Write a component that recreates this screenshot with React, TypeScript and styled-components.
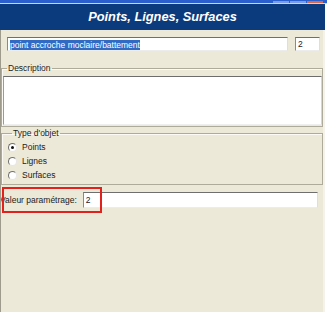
import styled, { createGlobalStyle } from "styled-components";

const GlobalStyle = createGlobalStyle`
  html, body {
    margin: 0;
    padding: 0;
    background: #fff;
  }
  body {
    font-family: "Liberation Sans", Arial, sans-serif;
  }
`;

const Window = styled.div`
  width: 327px;
  display: flex;
  flex-direction: column;
`;

const TitleStrip = styled.div`
  height: 3px;
  background: #2b5fce;
  border-bottom: 1px solid #c9d5ee;
  display: flex;
  justify-content: flex-end;
  gap: 1px;
  padding-right: 4px;
`;

const CaptionButton = styled.span<{ $close?: boolean }>`
  width: 16px;
  height: 2px;
  margin-top: 1px;
  background: ${(p) => (p.$close ? "#d9694c" : "#7c9be6")};
`;

const Header = styled.h1`
  margin: 0;
  width: 325px;
  height: 26px;
  background: #0b3b7c;
  color: #fff;
  font: italic bold 12.8px/26px "Liberation Sans", Arial, sans-serif;
  text-align: center;
`;

const Body = styled.div`
  width: 322px;
  height: 282px;
  background: #ece9d8;
  border-left: 1px solid #9e9b8c;
  border-right: 2px solid #f4f2ea;
  overflow: hidden;
  display: flex;
  flex-direction: column;
  font-size: 8.5px;
  color: #1c1c1c;
`;

const NameRow = styled.div`
  display: flex;
  gap: 7px;
  margin: 7px 0 0 6px;
`;

const TextBox = styled.div<{ $width: number; $height?: number }>`
  box-sizing: border-box;
  width: ${(p) => p.$width}px;
  height: ${(p) => p.$height ?? 14}px;
  background: #fff;
  border: 1px solid;
  border-color: #6f6f6f #dedede #ececec #8a8a8a;
  padding: 0 2px;
  line-height: ${(p) => (p.$height ?? 14) - 2}px;
  white-space: nowrap;
`;

const Selected = styled.span`
  display: inline-block;
  background: #316ac5;
  color: #fff;
  line-height: 10px;
  vertical-align: middle;
`;

const Group = styled.fieldset<{ $pad: string; $top: number }>`
  box-sizing: border-box;
  width: 322px;
  margin: ${(p) => p.$top}px 0 0;
  padding: ${(p) => p.$pad};
  border: 1px solid #aeab9b;
  box-shadow: inset 1px 1px 0 #fbfaf5;
  min-width: 0;
`;

const Legend = styled.legend`
  margin-left: 4px;
  padding: 0 1px;
  line-height: 10px;
  font-size: 8.5px;
`;

const TextArea = styled.div`
  box-sizing: border-box;
  height: 49px;
  background: #fff;
  border: 1px solid;
  border-color: #6d6d6d #d6d6d6 #efefef #9a9a9a;
`;

const RadioRow = styled.label`
  display: flex;
  align-items: center;
  gap: 5px;
  height: 14px;
  color: #222;
`;

const Radio = styled.span<{ $checked?: boolean }>`
  box-sizing: border-box;
  width: 9px;
  height: 9px;
  border-radius: 50%;
  border: 1px solid;
  border-color: #707070 #e6e6e6 #e6e6e6 #707070;
  background: #fff;
  display: flex;
  align-items: center;
  justify-content: center;

  &::after {
    content: "";
    width: 3px;
    height: 3px;
    border-radius: 50%;
    background: ${(p) => (p.$checked ? "#111" : "transparent")};
  }
`;

const ValueRow = styled.div`
  position: relative;
  display: flex;
  align-items: center;
  gap: 6px;
  height: 18px;
  margin-top: 6px;
`;

const ValueLabel = styled.span`
  margin-left: -1px;
  white-space: nowrap;
`;

const Highlight = styled.div`
  position: absolute;
  left: 1px;
  top: -4px;
  width: 100px;
  height: 26px;
  box-sizing: border-box;
  border: 2px solid #e2211d;
`;

const types = [
  { label: "Points", checked: true },
  { label: "Lignes", checked: false },
  { label: "Surfaces", checked: false },
];

export default function App() {
  return (
    <>
      <GlobalStyle />
      <Window>
        <TitleStrip>
          <CaptionButton />
          <CaptionButton />
          <CaptionButton $close />
        </TitleStrip>
        <Header>Points, Lignes, Surfaces</Header>
        <Body>
          <NameRow>
            <TextBox $width={281}>
              <Selected>point accroche moclaire/battement</Selected>
            </TextBox>
            <TextBox $width={25}>2</TextBox>
          </NameRow>

          <Group $pad="3px 0 1px 1px" $top={12}>
            <Legend>Description</Legend>
            <TextArea />
          </Group>

          <Group $pad="2px 0 2px 6px" $top={1}>
            <Legend>Type d'objet</Legend>
            {types.map((t) => (
              <RadioRow key={t.label}>
                <Radio $checked={t.checked} />
                {t.label}
              </RadioRow>
            ))}
          </Group>

          <ValueRow>
            <ValueLabel>Valeur paramétrage:</ValueLabel>
            <TextBox $width={235} $height={16}>2</TextBox>
            <Highlight />
          </ValueRow>
        </Body>
      </Window>
    </>
  );
}
